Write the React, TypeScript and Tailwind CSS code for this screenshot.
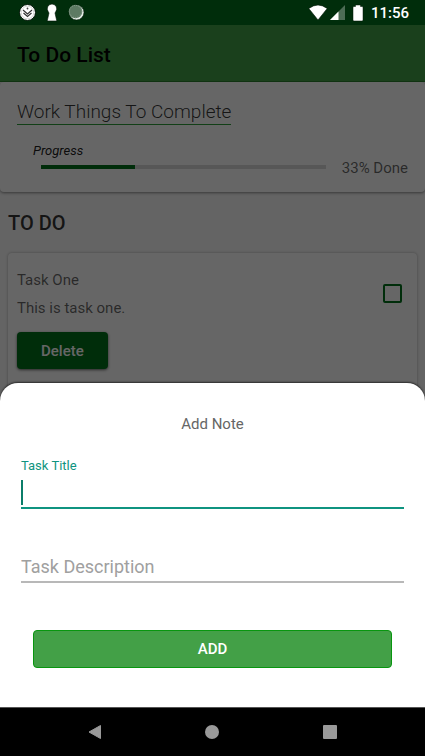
import React from "react";

function StatusBar() {
  return (
    <header className="flex h-[25px] shrink-0 items-center justify-between bg-[#002d0b] pr-4 pl-[19px] text-white">
      <div className="flex items-center gap-2">
        <svg width="17" height="17" viewBox="0 0 17 17" aria-hidden="true">
          <circle cx="8.500" cy="8.500" r="8" fill="#fff" stroke="#001506" />
          <circle cx="8.500" cy="8.500" r="6.300" fill="none" stroke="#bbb" strokeWidth="0.600" />
          <circle cx="8.500" cy="4.500" r="0.900" fill="#444" />
          <path d="M4 6l4.500 4L13 6M4.500 9l4 3.500 4-3.500" fill="none" stroke="#333" strokeWidth="1.200" />
        </svg>
        <svg width="16" height="19" viewBox="0 0 16 19" aria-hidden="true">
          <path
            d="M8 1a4.800 4.800 0 0 1 3.700 7.800L11 10l1.800 8H3.200L5 10l-.7-1.200A4.800 4.800 0 0 1 8 1z"
            fill="#fff"
            stroke="#001506"
            strokeWidth="0.600"
          />
        </svg>
        <svg width="17" height="17" viewBox="0 0 17 17" aria-hidden="true">
          <circle cx="8.500" cy="8.500" r="7.500" fill="#e4ece6" stroke="#001506" strokeWidth="0.600" />
          <circle cx="7.500" cy="7.500" r="6.800" fill="#5d7a63" />
          <circle cx="7.500" cy="7.500" r="6.100" fill="none" stroke="#8fa594" strokeDasharray="1 1.200" />
        </svg>
      </div>
      <div className="flex items-center">
        <svg width="20" height="17" viewBox="0 0 20 17" aria-hidden="true">
          <path d="M0.800 4.500Q10-2.500 19.200 4.500L10 16z" fill="#fff" stroke="#001506" strokeWidth="0.600" />
        </svg>
        <svg className="ml-[2px]" width="15" height="15" viewBox="0 0 15 15" aria-hidden="true">
          <path d="M15 0v15H0z" fill="#4d6c55" />
          <path d="M8.500 6.500V15H0z" fill="#fff" />
        </svg>
        <svg className="ml-[7px]" width="12" height="18" viewBox="0 0 12 18" aria-hidden="true">
          <path
            d="M3.500 1h5v1.500H10a1 1 0 0 1 1 1V16a1 1 0 0 1-1 1H2a1 1 0 0 1-1-1V3.500a1 1 0 0 1 1-1h1.500z"
            fill="#fff"
            stroke="#001506"
            strokeWidth="0.500"
          />
        </svg>
        <span className="ml-[7px] text-[15px] leading-5 font-medium">11:56</span>
      </div>
    </header>
  );
}

function ProgressCard() {
  return (
    <section className="rounded bg-white px-[17px] pt-[18px] pb-[14px] shadow-[0_1px_3px_rgba(0,0,0,0.45)]">
      <h2 className="w-fit border-b border-[#2e9f3a] text-[19px] leading-6 font-light text-black/80">
        Work Things To Complete
      </h2>
      <div className="mt-[17px] flex items-start">
        <div className="flex-1 pl-4">
          <p className="text-[13px] leading-[18px] text-black/90 italic">Progress</p>
          <div
            role="progressbar"
            aria-label="Progress"
            aria-valuenow={33}
            aria-valuemin={0}
            aria-valuemax={100}
            className="mt-[5px] ml-2 h-1 bg-[#d9d9d9]"
          >
            <div className="h-full w-[33%] bg-[#00701b]" />
          </div>
        </div>
        <span className="mt-4 ml-4 text-[15px] leading-5 text-black/60">33% Done</span>
      </div>
    </section>
  );
}

function TaskCard() {
  return (
    <article className="mx-2 flex h-[150px] justify-between rounded bg-white px-[9px] pt-[17px] shadow-[0_0_3px_rgba(0,0,0,0.3)]">
      <div>
        <h3 className="text-[15px] leading-5 text-black/60">Task One</h3>
        <p className="mt-2 text-[15px] leading-5 text-black/60">This is task one.</p>
        <button
          type="button"
          className="mt-[14px] h-[37px] rounded bg-[#00701b] px-6 text-[15px] leading-5 font-medium text-white shadow-[0_1px_3px_rgba(0,0,0,0.6)]"
        >
          Delete
        </button>
      </div>
      <input
        type="checkbox"
        aria-label="Complete Task One"
        className="mt-[14px] mr-[6px] h-[19px] w-[19px] appearance-none rounded-[2px] border-2 border-[#00701b]"
      />
    </article>
  );
}

function AddNoteSheet() {
  return (
    <form
      onSubmit={(event) => event.preventDefault()}
      className="absolute inset-x-0 bottom-0 rounded-t-[18px] bg-white px-[21px] pt-[31px] pb-[39px] shadow-[0_-1px_2px_rgba(0,0,0,0.6)]"
    >
      <h2 className="text-center text-[15px] leading-5 text-[#666]">Add Note</h2>
      <label htmlFor="task-title" className="mt-6 block text-[13px] leading-4 text-[#0f9480]">
        Task Title
      </label>
      <div className="mt-[6px] flex h-[29px] items-start border-b-2 border-[#0f9480]">
        <span className="h-[25px] w-[2px] bg-[#0b7d69]" />
        <input id="task-title" className="h-6 min-w-0 flex-1 text-lg text-black/80 caret-transparent outline-none" />
      </div>
      <input
        aria-label="Task Description"
        placeholder="Task Description"
        className="mt-[42px] block h-8 w-full border-b-2 border-[#b8b8b8] text-lg text-black/80 outline-none placeholder:text-[#a0a0a0]"
      />
      <div className="mt-[47px] px-3">
        <button
          type="submit"
          className="block h-[38px] w-full rounded border border-[#08960f] bg-[#43a047] text-[15px] leading-5 font-medium text-white"
        >
          ADD
        </button>
      </div>
    </form>
  );
}

function NavigationBar() {
  return (
    <nav className="flex h-[49px] shrink-0 items-center justify-around border-t border-[#555] bg-black px-9">
      <button type="button" aria-label="Back">
        <svg width="14" height="16" viewBox="0 0 14 16" aria-hidden="true">
          <path d="M12.500 1.500v13L1 8z" fill="#999" stroke="#999" strokeLinejoin="round" />
        </svg>
      </button>
      <button type="button" aria-label="Home">
        <svg width="14" height="14" viewBox="0 0 14 14" aria-hidden="true">
          <circle cx="7" cy="7" r="7" fill="#999" />
        </svg>
      </button>
      <button type="button" aria-label="Recent apps">
        <svg width="14" height="14" viewBox="0 0 14 14" aria-hidden="true">
          <rect width="14" height="14" rx="1" fill="#999" />
        </svg>
      </button>
    </nav>
  );
}

export default function App() {
  return (
    <div className="flex h-screen flex-col font-[Roboto,sans-serif]">
      <StatusBar />
      <div className="relative flex-1 overflow-hidden bg-[#fafafa]">
        <div className="flex h-[57px] items-center border-b border-[#2c862f] bg-[#43a047] px-[17px] pt-[3px]">
          <h1 className="text-[21px] leading-7 font-medium text-black">To Do List</h1>
        </div>
        <main>
          <ProgressCard />
          <h2 className="mt-[18px] mb-4 px-2 text-xl leading-[27px] font-medium text-black/80">TO DO</h2>
          <TaskCard />
        </main>
        <div className="absolute inset-0 bg-black/60" />
        <AddNoteSheet />
      </div>
      <NavigationBar />
    </div>
  );
}
